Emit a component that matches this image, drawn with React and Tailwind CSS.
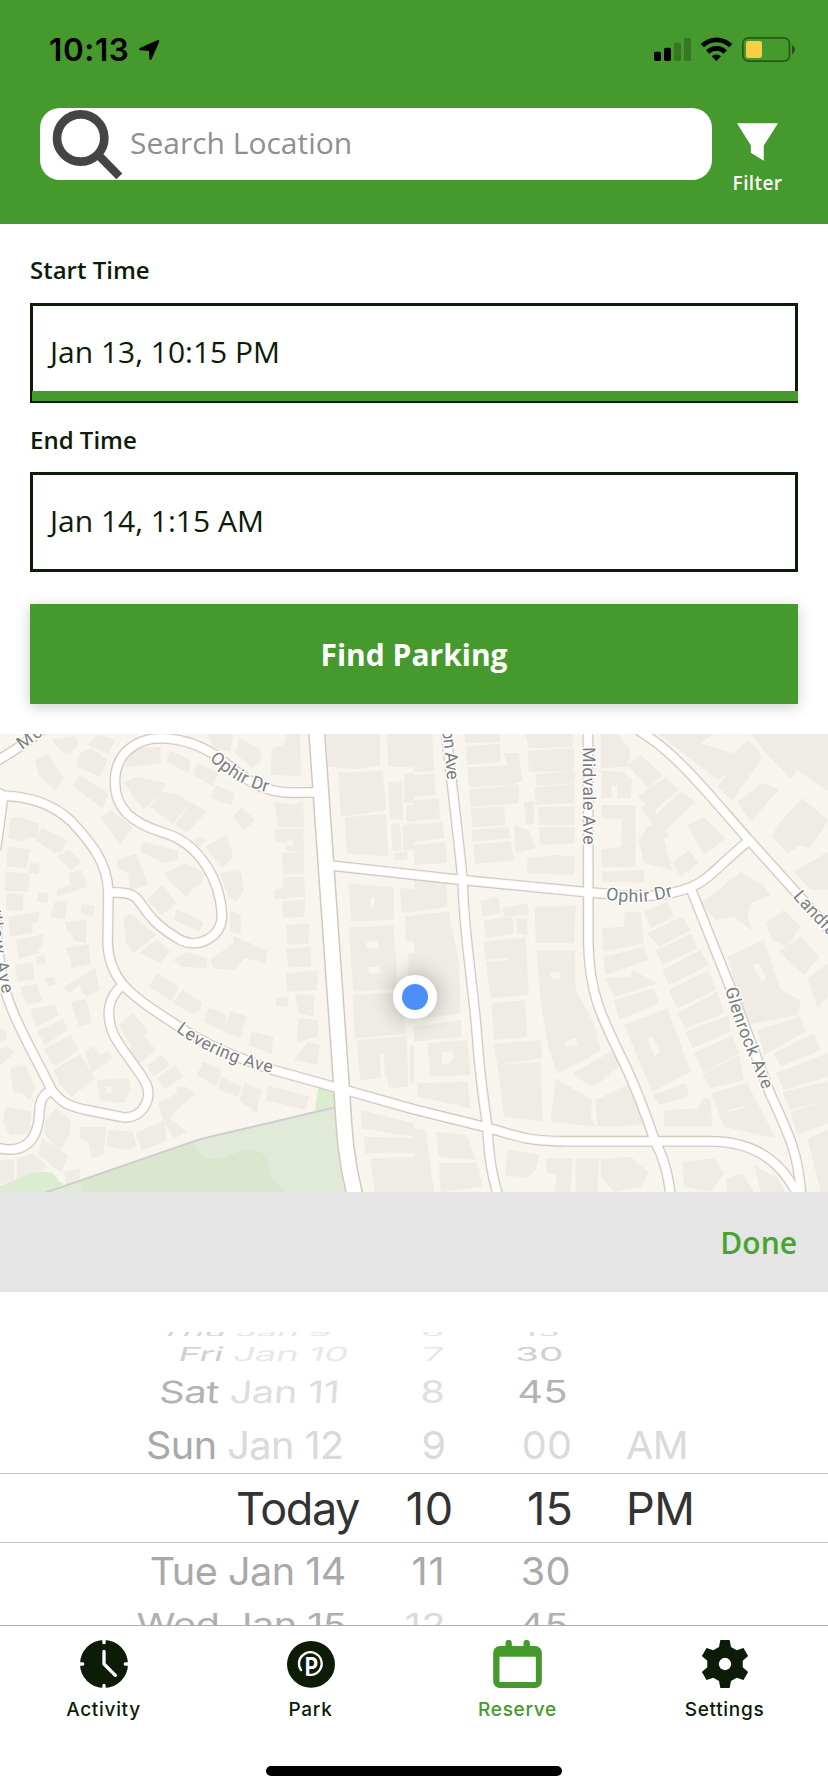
import React from "react";

const SANS = "font-['Open_Sans','Noto_Sans',sans-serif]";

/* ---------- map data (3 units per pixel) ---------- */

const BUILDINGS_WEST = [
  "30,265 60,262 118,280 110,325 85,322 60,335 25,325",
  "125,292 200,330 185,365 165,370 107,330",
  "205,358 245,395 215,422 170,380",
  "22,350 88,358 80,415 20,410",
  "90,398 120,402 116,434 85,428",
  "14,425 90,430 85,485 14,482", "20,490 70,492 68,542 18,540",
  "115,485 145,490 142,518 112,515",
  "205,430 245,420 262,470 172,500 170,478 212,462",
  "165,515 203,512 195,568 152,560 158,530", "245,522 284,528 280,562 242,550",
  "25,560 118,545 115,578 96,580 98,608 30,620",
  "195,575 260,568 258,638 220,630 218,608 200,602",
  "48,630 130,612 128,640 115,660 118,670 55,686",
  "196,655 265,642 272,702 215,715 212,690",
  "45,705 98,698 104,748 52,755", "108,682 132,674 138,698 112,704", "135,745 160,740 170,762 145,770",
  "192,770 285,715 300,780 262,800 245,790 240,765 205,790",
  "62,770 110,762 128,815 78,825", "213,815 258,806 276,880 236,888",
  "90,838 165,822 175,855 108,892", "110,902 190,868 205,900 135,945",
  "130,958 212,915 236,958 165,1010", "160,1020 240,972 285,1045 215,1100 180,1065",
  "255,965 280,948 300,975 325,962 338,985 275,1028",
  "290,1050 385,1045 392,1065 375,1120 300,1110",
  "0,895 18,905 20,930 0,935", "0,960 20,945 45,968 0,1005",
  "30,1015 78,1005 105,1075 90,1110 65,1090 40,1085",
  "15,1130 95,1145 88,1210 30,1215 10,1180",
  "135,1170 170,1135 212,1170 208,1215 180,1262 135,1215",
  "125,1225 205,1275 185,1330 115,1275", "50,1285 100,1270 145,1312 50,1350", "0,1290 42,1288 42,1360 0,1360",
  "192,1325 240,1315 242,1345 200,1365",
  "240,1190 320,1190 310,1275 275,1285 265,1240 240,1225",
  "325,1200 400,1205 410,1250 380,1260 320,1248", "408,1210 490,1172 502,1232 425,1262",
  "475,1120 530,1090 530,1068 560,1072 585,1092 520,1150 512,1165 560,1205 525,1225 490,1175",
  "440,1005 485,975 510,1005 460,1040", "470,1045 525,1005 550,1040 495,1078",
  "355,885 400,850 445,905 395,950",  "385,955 430,915 468,960 420,1000",
  "105,90 145,72 190,145 165,182 115,135",
  "155,30 225,18 235,45 210,72 180,60", "240,70 275,55 322,90 300,140 230,110",
  "295,12 345,30 325,70 262,45",
  "235,135 325,190 308,235 220,170", "330,240 398,290 362,343 303,265",
  "400,55 482,50 482,100 375,112", "512,62 572,90 565,130 498,92",
  "372,160 405,142 498,158 485,185 430,240", "590,98 655,130 640,170 580,135",
  "485,185 530,192 570,215 520,282 450,230", "572,215 620,245 560,308 525,285",
  "648,165 705,190 695,225 632,205", "725,232 765,270 732,302 698,260",
  "625,12 700,12 690,65 640,55", "718,22 780,60 785,95 755,112 705,70",
  "815,55 850,45 860,12 900,12 903,138 812,135",
  "822,215 880,225 910,213 912,290 835,290", "825,298 910,295 912,365 858,362 855,338 825,335",
  "845,368 912,366 912,432 850,433", "850,442 912,440 916,500 820,508 825,478 850,475",
  "845,515 916,508 912,560 850,565", "860,585 928,580 925,640 862,645",
  "858,655 932,650 934,712 865,712", "900,725 955,722 950,780 862,785 858,732",
  "885,792 943,795 940,860 895,850", "830,805 865,800 862,832 828,828",
  "895,865 955,870 955,918 890,940", "925,935 960,945 950,1005 880,990",
  "615,350 680,315 700,380 665,415", "580,335 600,318 618,332 598,350",
  "430,335 535,362 535,390 490,398 420,365",
  "350,392 408,370 445,465 390,480 385,430 358,420",
  "490,430 560,400 615,432 600,462 575,480 560,500 515,460",
  "440,510 485,465 530,520 485,555", "660,430 720,418 733,478 710,515 685,500",
  "690,540 722,555 722,612 690,605", "530,538 610,575 600,605 522,570",
  "370,565 390,550 468,615 400,670 378,640",
  "420,668 470,628 510,662 480,700", "520,690 560,665 622,685 620,715 545,710",
  "632,688 700,640 700,618 802,662 795,700 735,685 700,720 640,715",
  "470,728 538,772 515,812 448,770", "548,778 605,818 600,840 575,852 520,820",
  "628,832 680,855 672,902 610,875", "692,842 740,860 720,925 668,905",
  "755,905 820,920 815,972 745,945",
  "610,995 665,1020 650,1070 590,1035", "662,1040 725,1068 715,1100 655,1080",
  "735,1058 785,1080 770,1148 718,1112", "805,1068 928,1098 915,1140 795,1110",
  "980,12 1140,12 1140,105 1070,118 985,110", "1015,128 1148,122 1158,240 1022,260",
  "1035,262 1158,252 1165,380 1040,370",
  "1160,12 1242,12 1242,112 1165,110", "1165,160 1205,152 1210,270 1170,265",
  "1172,282 1200,280 1205,360 1178,362", "1180,370 1222,365 1222,390 1182,392", "1208,285 1242,280 1242,360 1210,362", "1212,130 1242,128 1242,220 1212,220", "1218,225 1242,225 1242,275 1218,272",
  "1045,460 1180,472 1182,570 1055,575", "1045,592 1180,585 1190,700 1190,775 1060,785",
  "1058,795 1215,785 1215,912 1065,925", "1070,930 1220,918 1225,1070 1168,1075 1160,1045 1080,1050",
  "1200,475 1242,478 1242,548 1205,548", "1215,558 1242,558 1242,635 1218,635", "1225,670 1242,670 1242,750 1225,745",
  "1230,945 1242,945 1242,1060 1230,1060",
  "1082,1140 1242,1180 1242,1220 1085,1195", "1092,1220 1242,1225 1242,1270 1095,1270",
  "1110,1285 1242,1282 1242,1386 1125,1386",
];

const BUILDINGS_EAST = [
  "0,12 55,12 60,125 0,125", "0,135 62,130 65,195 0,200", "0,210 75,205 78,268 0,272", "0,285 85,275 92,325 0,335", "0,345 95,335 98,400 0,405",
  "150,12 255,12 258,35 155,40", "155,50 258,40 260,95 160,105", "160,112 300,105 305,165 165,172",
  "165,178 315,165 315,220 170,230", "170,235 270,230 275,285 175,292", "172,300 285,290 290,325 175,335", "178,342 290,335 300,390 183,402",
  "335,12 478,12 475,52 345,55", "340,62 480,55 480,125 345,125", "365,132 485,125 480,160 368,168",
  "362,172 482,162 480,220 365,225", "372,232 482,228 480,285 375,285", "375,292 482,290 482,340 378,345", "340,385 420,375 482,380 480,435 340,430",
  "270,70 315,68 325,155 300,160", "330,215 360,212 360,280 335,285", "300,285 345,300 365,355 305,370",
  "560,12 610,12 650,60 640,110 560,115", "562,122 625,125 655,150 650,205 562,205",
  "562,225 665,225 665,410 562,412 562,360 620,350 625,268 562,265", "565,425 690,420 690,458 565,455",
  "640,105 680,75 745,135 705,175", "670,200 755,142 795,180 715,245", "725,255 800,185 845,215 755,300",
  "675,330 705,285 740,290 775,420 690,400", "680,230 715,225 765,320 745,330",
  "820,285 870,262 935,325 868,375", "775,395 825,360 855,400 800,440",
  "735,12 900,12 860,40 960,70 1000,30 1040,65 910,150",
  "910,170 960,100 1035,70 1045,85 955,210", "970,215 1045,160 1095,178 1010,275",
  "1090,285 1165,205 1242,270 1225,300 1185,355 1160,345 1120,370 1075,320",
  "1010,12 1242,12 1242,185 1150,120 1130,145 1060,75", "1140,425 1242,365 1242,480 1190,480",
  "200,512 255,500 260,550 205,560", "210,570 295,560 300,610 215,625", "265,535 340,520 345,555 270,560", "305,565 340,565 340,615 310,610",
  "208,635 335,622 345,795 230,805", "232,820 332,810 340,920 240,930",
  "240,942 380,930 385,985 250,1005", "250,1005 380,995 385,1175 270,1160",
  "362,530 485,528 480,640 365,640", "368,660 482,660 485,780 540,880 560,960 520,985 430,1030 405,960 380,820",
  "425,1045 535,1110 530,1160 545,1190 410,1175", "475,1030 600,960 625,1000 560,1055 530,1070",
  "545,1110 650,1060 680,1130 690,1185 550,1190",
  "565,595 630,590 632,545 680,545 690,640 568,665", "568,680 690,650 705,690 575,735", "575,745 650,740 655,720 730,760 600,800", "600,810 720,775 735,820 615,870",
  "630,885 760,835 830,1025 715,1085",
  "690,545 760,515 780,560 710,595", "700,610 805,560 830,600 735,650", "725,660 830,612 850,655 745,705", "745,720 860,660 885,705 765,765",
  "765,780 885,720 905,780 790,835", "790,850 910,785 930,850 815,895", "815,905 945,855 950,905 835,955", "840,970 955,915 975,970 870,1030",
  "865,1035 975,975 990,1050 890,1075",
  "715,1095 815,1060 825,1100 735,1125", "750,1140 850,1135 870,1105 890,1110 895,1190 750,1188",
  "890,1090 1000,1060 1085,1225 930,1190",
  "860,520 925,470 980,425 1045,465 1070,495 1010,520 1000,560 1020,605 960,560 905,570",
  "940,680 1050,630 1100,780 1160,810 1150,855 1000,885",
  "1055,580 1110,540 1160,590 1120,650 1075,630", "1095,665 1160,620 1215,680 1170,735 1130,700",
  "1180,745 1242,700 1242,800 1210,830", "1030,900 1160,860 1175,905 1050,975",
  "1080,970 1200,910 1220,960 1100,1010", "1085,1030 1242,970 1242,1040 1110,1080", "1105,1085 1242,1055 1242,1110 1130,1140",
  "1130,1145 1242,1110 1242,1180 1150,1215", "1180,1225 1242,1200 1242,1386 1220,1386",
  "0,425 98,460 100,530 0,545", "0,555 105,545 135,700 140,850 0,870", "0,890 140,870 145,920 0,935",
  "40,940 160,930 170,1035 50,1040", "10,1060 160,1055 170,1135 10,1100", "0,1195 35,1200 60,1386 0,1386",
  "65,1205 160,1215 185,1290 75,1280", "75,1300 190,1298 205,1370 80,1386",
  "280,1258 375,1275 365,1320 340,1345 275,1335", "395,1285 475,1285 470,1386 420,1386 430,1335 400,1330", "485,1285 555,1285 550,1386 485,1386",
  "560,1288 650,1280 705,1330 680,1370 600,1386 560,1340", "805,1295 900,1285 930,1330 890,1386 810,1370", "935,1345 985,1330 1020,1386 940,1386", "1020,1305 1090,1345 1115,1386 1040,1386",
];

const COURTYARDS = [
  "1112,502 1125,500 1122,535 1112,528", "1100,635 1135,632 1135,655 1100,655", "1105,712 1140,710 1140,728 1108,730",
  "1140,975 1152,968 1155,1048 1142,1050", "1650,725 1682,728 1678,745 1655,748", "1940,925 1958,920 1980,965 1965,982",
  "2258,705 2275,700 2300,745 2285,755", "315,1070 335,1068 335,1090 318,1090", "860,332 878,332 878,350 862,348",
  "1835,165 1852,165 1852,205 1835,205", "1450,690 1520,684 1520,690 1450,697", "1325,965 1360,963 1362,985 1340,1005 1325,1000",
  "1695,935 1725,925 1735,942 1700,950", "2185,1140 2230,1128 2232,1134 2188,1148",
];

const ROADS = [
  "M10 197 L-12 360",
  "M-20 98 Q60 55 140 -10",
  "M-20 180 L10 197 C110 200 172 234 215 275 C270 335 322 395 325 485 L323 640 C325 690 345 735 370 765 C400 800 450 835 530 885 C620 950 720 985 820 1020 L1025 1077 L1242 1138 L1460 1192 C1560 1222 1590 1234 1700 1234 L2130 1234 C2270 1234 2350 1300 2395 1400",
  "M325 488 C460 480 380 540 545 632 C600 655 666 620 666 555 C660 450 600 340 490 308 C400 280 345 240 345 155 C345 70 410 22 490 25 C560 28 610 50 655 82 C740 150 780 188 880 188 L960 187",
  "M978 405 L1242 434 L1387 450 L1765 487 L1817 491 C1930 505 2000 498 2072 472 C2130 448 2150 410 2247 332",
  "M1905 -5 C2030 65 2130 200 2247 330 L2500 612",
  "M1337 -10 C1350 120 1385 400 1388 460 C1394 640 1420 760 1432 930 C1440 1050 1455 1130 1462 1195 C1468 1290 1476 1340 1496 1400",
  "M1764 0 L1765 640 C1768 800 1810 870 1875 1005 C1920 1100 1950 1190 1965 1234 C1995 1290 2005 1340 2012 1400",
  "M2072 475 L2190 770 L2310 1090 C2370 1220 2395 1270 2404 1400",
  "M-14 540 C-5 650 -5 710 22 800 C50 890 110 985 155 1080 C185 1120 210 1130 260 1140 L370 1162 C430 1166 462 1100 435 1055 C410 1010 360 955 340 912 C318 860 320 800 370 765",
  "M155 1080 C105 1105 125 1150 112 1190 C98 1250 50 1270 -12 1252",
];

const AVENUE = "M949 -10 L978 405 L1025 1075 C1033 1200 1035 1280 1066 1400";

function StreetName({ id, d, length, children }) {
  return (
    <>
      <path id={id} d={d} fill="none" />
      <text
        className="font-[Roboto,sans-serif]"
        fontSize="53"
        fill="#7b7c7f"
        stroke="#fdfcfa"
        strokeWidth="10"
        strokeLinejoin="round"
        paintOrder="stroke"
      >
        <textPath href={`#${id}`} textLength={length}>
          {children}
        </textPath>
      </text>
    </>
  );
}

function StreetMap() {
  return (
    <svg viewBox="0 12 2484 1374" className="block h-full w-full bg-[#f8f5ee]" aria-label="Map">
      <g fill="#efece5">
        {BUILDINGS_WEST.map((p) => (
          <polygon key={p} points={p} />
        ))}
      </g>
      <g fill="#efece5" transform="translate(1242 0)">
        {BUILDINGS_EAST.map((p) => (
          <polygon key={p} points={p} />
        ))}
      </g>
      <g fill="#f8f5ee">
        {COURTYARDS.map((p) => (
          <polygon key={p} points={p} />
        ))}
      </g>
      <path d="M955 1070 L1010 1085 V1135 L945 1142 Z M0 1368 Q30 1358 75 1335 Q120 1320 155 1328 Q170 1338 175 1352 L192 1362 L140 1388 H0Z" fill="#dcecd0" />
      <path d="M135 1388 L600 1228 L1012 1130 L1070 1388Z" fill="#e1e9d8" />
      <path d="M240 1352 L580 1240 C600 1290 640 1300 700 1272 C760 1245 800 1260 805 1310 C812 1350 840 1370 865 1388 H250Z" fill="#dbe6cf" />
      <path d="M135 1388 L600 1228 L1012 1130" fill="none" stroke="#cfcdd0" strokeWidth="6" />
      <g fill="none" strokeLinejoin="round">
        <g stroke="#d2c9bd" strokeWidth="33">
          {ROADS.map((d) => (
            <path key={d} d={d} />
          ))}
          <path d={AVENUE} strokeWidth="52" />
        </g>
        <g stroke="#f6f4f1" strokeWidth="26">
          {ROADS.map((d) => (
            <path key={d} d={d} />
          ))}
        </g>
        <g stroke="#ffffff" strokeWidth="21">
          {ROADS.map((d) => (
            <path key={d} d={d} />
          ))}
          <path d={AVENUE} strokeWidth="43" />
        </g>
      </g>
      <StreetName id="mc" d="M66 60 L180 -22" length="120">McC</StreetName>
      <StreetName id="ophir-w" d="M628 88 C690 145 740 175 835 195" length="202">Ophir Dr</StreetName>
      <StreetName id="levering" d="M527 903 C610 965 700 1005 835 1033" length="316">Levering Ave</StreetName>
      <StreetName id="willow" d="M-48 492 C-20 600 -22 690 13 812" length="306">Willow Ave</StreetName>
      <StreetName id="kelton" d="M1312 -82 C1330 20 1338 80 1341 160" length="234">Kelton Ave</StreetName>
      <StreetName id="midvale" d="M1748 52 L1750 352" length="292">Midvale Ave</StreetName>
      <StreetName id="ophir-e" d="M1816 508 C1900 522 1960 518 2040 492" length="206">Ophir Dr</StreetName>
      <StreetName id="landfair" d="M2378 500 C2420 550 2470 600 2600 735" length="300">Landfair Ave</StreetName>
      <StreetName id="glenrock" d="M2176 776 C2200 880 2240 960 2289 1082" length="324">Glenrock Ave</StreetName>
    </svg>
  );
}

/* ---------- icons ---------- */

function SearchIcon() {
  return (
    <svg viewBox="154 324 213 213" className="h-[71px] w-[71px]" fill="none" stroke="#454545">
      <circle cx="240" cy="411" r="71" strokeWidth="26" />
      <path d="M296 465 L356 526" strokeWidth="25" />
    </svg>
  );
}

function StatusIcons() {
  return (
    <svg viewBox="714 108 429 81" className="h-[27px] w-[143px]">
      <rect x="717" y="155" width="21" height="28" rx="5" />
      <rect x="747" y="143" width="21" height="40" rx="5" />
      <rect x="777" y="128" width="21" height="55" rx="5" opacity=".22" />
      <rect x="807" y="113" width="21" height="70" rx="5" opacity=".22" />
      <path d="M857 132 A67 67 0 0 1 952 132 L942 142 A53 53 0 0 0 867 142Z" />
      <path d="M873 151 A44 44 0 0 1 936 151 L926 161 A30 30 0 0 0 883 161Z" />
      <path d="M890 169 A20 20 0 0 1 918 169 L904 183Z" />
      <rect x="983.5" y="113.500" width="140" height="70" rx="17" fill="none" stroke="#000" strokeWidth="5" opacity=".42" />
      <path d="M1131 135 Q1140 140 1140 149 Q1140 158 1131 163Z" opacity=".5" />
      <rect x="993" y="123" width="48" height="51" rx="7" fill="#f8ce46" />
    </svg>
  );
}

function ClockIcon() {
  return (
    <svg viewBox="237 90 144 144" className="h-12 w-12">
      <circle cx="309" cy="162" r="72" fill="#0d1c07" />
      <path
        d="M309 88v10M309 236v-10M235 162h10M383 162h-10M309 124V162L343 196"
        fill="none"
        stroke="#fff"
        strokeWidth="10"
        strokeLinecap="round"
        strokeLinejoin="round"
      />
    </svg>
  );
}

function ParkIcon() {
  return (
    <svg viewBox="858 90 144 144" className="h-12 w-12">
      <ellipse cx="930" cy="163" rx="72" ry="70" fill="#0d1c07" />
      <path d="M900 180 A34 34 0 1 1 932 194.500 H919" fill="none" stroke="#fff" strokeWidth="7" strokeLinecap="round" />
      <text x="911" y="194" className="font-[Inter,sans-serif] font-bold" fontSize="71" textLength="40" lengthAdjust="spacingAndGlyphs" fill="#fff">
        P
      </text>
    </svg>
  );
}

function CalendarIcon() {
  return (
    <svg viewBox="238 90 146 144" className="h-12 w-[49px]" fill="#46992c">
      <path
        fillRule="evenodd"
        d="M258 108H275V99a9 9 0 0 1 19 0v9H329V99a9 9 0 0 1 19 0v9H364a20 20 0 0 1 20 20V214a20 20 0 0 1-20 20H258a20 20 0 0 1-20-20V128a20 20 0 0 1 20-20ZM257 140V216H366V140Z"
      />
    </svg>
  );
}

const TOOTH = [[-18, -51], [-14, -72], [14, -72], [18, -51]];
const GEAR = [0, 60, 120, 180, 240, 300]
  .flatMap((deg) => {
    const a = (deg * Math.PI) / 180;
    return TOOTH.map(([x, y]) => [x * Math.cos(a) - y * Math.sin(a), x * Math.sin(a) + y * Math.cos(a)].map((n) => n.toFixed(1)).join(","));
  })
  .join(" ");

function GearIcon() {
  return (
    <svg viewBox="-72 -72 144 144" className="h-12 w-12">
      <polygon points={GEAR} fill="#0d1c07" />
      <circle r="18.500" fill="#fff" />
    </svg>
  );
}

/* ---------- sections ---------- */

function Header() {
  return (
    <header className="h-56 bg-[#46992c]">
      <div className="flex h-[108px] items-start justify-between pt-9 pr-8 pl-[49px]">
        <div className="flex items-center">
          <span className="font-[Inter,sans-serif] text-[31.500px] leading-[28px] font-semibold tracking-[0.6px] text-black">10:13</span>
          <svg viewBox="408 117 66 66" className="ml-[8px] h-[22px] w-[22px]">
            <path d="M415 143 L466 121 Q474 118 471 127 L449 177 Q444 183 442 176 L441 153 L415 151 Q408 148 415 143Z" />
          </svg>
        </div>
        <StatusIcons />
      </div>
      <div className="flex pl-10">
        <div className="flex h-18 w-[672px] items-center rounded-[20px] bg-white pl-[12px]">
          <SearchIcon />
          <span className="ml-[7px] pb-[4px] text-[30px] text-[#8f8f93]">Search Location</span>
        </div>
        <div className="flex w-[91px] flex-col items-center pt-[15px]">
          <svg viewBox="963 369 124 113" className="h-[38px] w-[41px]" fill="#fff">
            <path d="M963 369H1087L1044 436V482L1005 458V436Z" />
          </svg>
          <span className="mt-[9px] text-[19px] leading-[26px] font-semibold tracking-[0.4px] text-white">Filter</span>
        </div>
      </div>
    </header>
  );
}

function BookingForm() {
  return (
    <section className="h-[510px] bg-white px-[30px] pt-[29px] text-[#0d1c07]">
      <div className="h-[50px] text-[24px] leading-[34px] font-semibold">Start Time</div>
      <div className="flex h-[100px] flex-col border-[3px] border-b-2 border-[#0d1c07]">
        <div className="flex flex-1 items-center pt-[5px] pl-[17px] text-[30px]">Jan 13, 10:15 PM</div>
        <div className="-mr-[3px] -ml-px h-[10px] bg-[#46992c]" />
      </div>
      <div className="h-[69px] pt-[20px] text-[24px] leading-[34px] font-semibold">End Time</div>
      <div className="flex h-[100px] items-center border-[3px] border-[#0d1c07] pb-[4px] pl-[17px] text-[30px]">Jan 14, 1:15 AM</div>
      <div className="mt-8 flex h-[100px] items-center justify-center bg-[#46992c] text-[30px] font-bold text-white shadow-[0_3px_14px_rgba(0,0,0,0.2)]">
        Find Parking
      </div>
    </section>
  );
}

const pale = "text-[#dadada]";
const mid = "text-[#a9a9a9]";

function Cell({ className = "", scale, skew = 0, left = false, children }) {
  return (
    <div className={`flex ${left ? "justify-start" : "justify-end"} ${className}`}>
      <span
        className={`block whitespace-pre ${left ? "origin-left" : "origin-right"}`}
        style={{ transform: `scale(${scale[0]}, ${scale[1]}) skewX(${skew}deg)` }}
      >
        {children}
      </span>
    </div>
  );
}

function WheelRow({ height, scale, skew, date, hour, minute, period, pad, tight = false }) {
  return (
    <div
      className="grid shrink-0 grid-cols-[360px_94px_119px_255px] content-center items-center"
      style={{ height }}
    >
      <div style={{ paddingRight: pad[0] }}>
        <Cell scale={scale} skew={skew} className={tight ? "tracking-[-1.4px]" : ""}>{date}</Cell>
      </div>
      <div className="tracking-[0.8px]" style={{ paddingRight: pad[1] }}><Cell scale={scale}>{hour}</Cell></div>
      <div className="tracking-[0.2px]" style={{ paddingRight: pad[2] }}><Cell scale={scale}>{minute}</Cell></div>
      <div className="pl-[53px]"><Cell scale={scale} left>{period}</Cell></div>
    </div>
  );
}

function DateWheel() {
  return (
    <section className="h-[333px] overflow-hidden bg-white pt-10 font-[Inter,sans-serif] text-[45px] leading-none tracking-[-0.6px]">
      <div className="flex h-[5px] flex-col justify-end overflow-hidden">
        <WheelRow height={9} scale={[0.83, 0.22]} skew={-8} pad={[28, 9, 13]}
          date={<span className="text-[#e6e6e6]"><span className="text-[#d6d6d6]">Thu</span> Jan 9</span>}
          hour={<span className="text-[#e6e6e6]">6</span>} minute={<span className="text-[#dadada]">15</span>} />
      </div>
      <WheelRow height={32} scale={[0.86, 0.43]} skew={-8} pad={[12, 9, 9]}
        date={<span className="text-[#e8e8e8]"><span className="text-[#d0d0d0]">Fri</span> Jan 10</span>}
        hour={<span className="text-[#e8e8e8]">7</span>} minute={<span className="text-[#cfcfcf]">30</span>} />
      <WheelRow height={44} scale={[0.89, 0.68]} skew={-3} pad={[21, 8, 5]}
        date={<span className="text-[#dedede]"><span className="text-[#b3b3b3]">Sat</span> Jan 11</span>}
        hour={<span className="text-[#dedede]">8</span>} minute={<span className="text-[#b3b3b3]">45</span>} />
      <WheelRow height={62} scale={[0.88, 0.86]} skew={0} pad={[16, 7, 1]}
        date={<span className={pale}><span className={mid}>Sun</span> Jan 12</span>}
        hour={<span className={pale}>9</span>} minute={<span className={pale}>00</span>} period={<span className={pale}>AM</span>} />
      <div className="mt-[-2px] shrink-0 border-y border-[#c9c9c9] text-[#333333]">
        <WheelRow height={68} scale={[1, 1]} skew={0} pad={[1, 0, 0]} tight date="Today" hour="10" minute="15" period="PM" />
      </div>
      <WheelRow height={54} scale={[0.88, 0.86]} skew={0} pad={[14, 9, 2]}
        date={<span className={mid}>Tue Jan 14</span>} hour={<span className={mid}>11</span>} minute={<span className={mid}>30</span>} />
      <WheelRow height={54} scale={[0.88, 0.7]} skew={0} pad={[14, 8, 4]}
        date={<span className="text-[#b0b0b0]">Wed Jan 15</span>} hour={<span className={pale}>12</span>} minute={<span className="text-[#b0b0b0]">45</span>} />
    </section>
  );
}

function Tab({ icon, label, active }) {
  return (
    <div className={`flex flex-1 flex-col items-center ${active ? "text-[#46992c]" : "text-[#0d1c07]"}`}>
      {icon}
      <span className="mt-[9px] font-[Inter,sans-serif] text-[19px] leading-[26px] font-medium tracking-[0.7px]">{label}</span>
    </div>
  );
}

export default function App() {
  return (
    <div className={`flex h-[1792px] w-[828px] flex-col overflow-hidden bg-white ${SANS}`}>
      <Header />
      <BookingForm />
      <section className="relative h-[458px] shrink-0 overflow-hidden">
        <StreetMap />
        <div className="absolute top-[241px] left-[393px] h-11 w-11 rounded-full border-[9px] border-white bg-[#4c8ff8] shadow-[0_0_22px_rgba(0,0,0,0.3)]" />
      </section>
      <div className="flex h-[100px] shrink-0 items-center justify-end bg-[#e5e5e5] pr-[31px] text-[30px] font-semibold text-[#46a62f]">Done</div>
      <DateWheel />
      <nav className="flex h-[167px] shrink-0 flex-col justify-between border-t border-[#adadad] bg-white">
        <div className="flex pt-[14px]">
          <Tab icon={<ClockIcon />} label="Activity" />
          <Tab icon={<ParkIcon />} label="Park" />
          <Tab icon={<CalendarIcon />} label="Reserve" active />
          <Tab icon={<GearIcon />} label="Settings" />
        </div>
        <div className="mb-4 h-[10px] w-[296px] self-center rounded-full bg-black" />
      </nav>
    </div>
  );
}
